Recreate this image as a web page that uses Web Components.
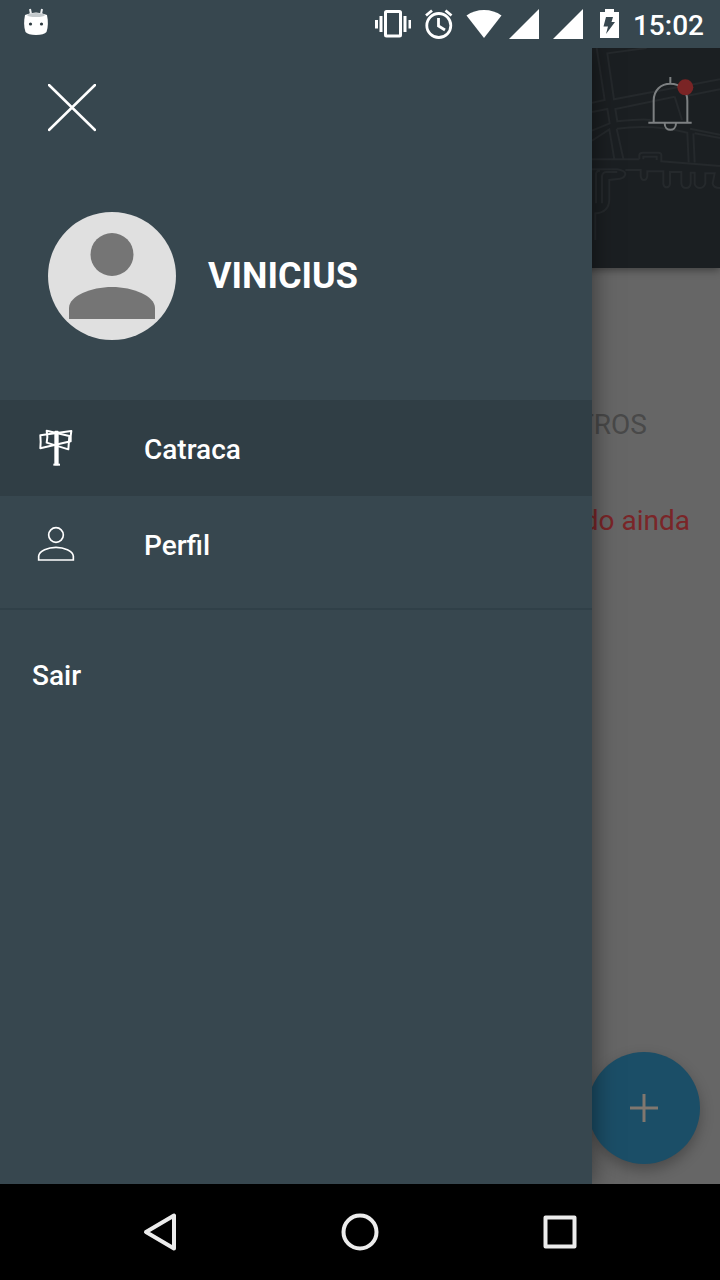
<!DOCTYPE html>
<html lang="pt-BR">
<head>
<meta charset="utf-8">
<meta name="viewport" content="width=device-width, initial-scale=1">
<title>Catraca</title>
<style>
  html, body { margin: 0; }
  body { font-family: Roboto, "Noto Sans", sans-serif; background: #000; }
</style>
</head>
<body>
<app-shell>
  <status-bar slot="status" time="15:02"></status-bar>
  <home-page slot="page"></home-page>
  <side-drawer slot="drawer" name="VINICIUS">
    <menu-item selected>
      <svg slot="icon" width="48" height="48" viewBox="36 42 144 144" fill="none" stroke="#fff" stroke-width="6" stroke-linejoin="round" aria-hidden="true">
        <path d="M61 76 154 63Q151 78 152 94L61 115Q63 96 61 76Z"/>
        <path d="M80 62 148 78 145 118 80 98Q84 80 80 62Z"/>
        <path d="M106 65H113V163H106Z" fill="#fff"/>
        <path d="M100 164H120"/>
      </svg>
      Catraca
    </menu-item>
    <menu-item>
      <svg slot="icon" width="48" height="48" viewBox="36 330 144 144" fill="none" stroke="#fff" stroke-width="5" aria-hidden="true">
        <circle cx="108" cy="375" r="22"/>
        <path d="M56 450V438C58 423 84 412 108 412S158 423 160 438V450Z"/>
      </svg>
      Perfil
    </menu-item>
    <menu-item slot="footer" plain>Sair</menu-item>
  </side-drawer>
  <nav-bar slot="nav"></nav-bar>
</app-shell>

<script>
class BaseElement extends HTMLElement {
  constructor() {
    super();
    this.attachShadow({ mode: 'open' });
  }
  connectedCallback() {
    this.shadowRoot.innerHTML = this.render();
  }
}

customElements.define('app-shell', class extends BaseElement {
  render() {
    return `
      <style>
        :host { display: flex; flex-direction: column; min-height: 100vh; }
        main { flex: 1; display: grid; grid-template-columns: minmax(0, 1fr) 128px; overflow: hidden; }
        slot { display: block; min-width: 0; }
        .page { grid-area: 1 / 1 / 2 / 3; display: grid; }
        .drawer { grid-area: 1 / 1; display: grid; z-index: 1; }
      </style>
      <slot name="status"></slot>
      <main>
        <slot class="page" name="page"></slot>
        <slot class="drawer" name="drawer"></slot>
      </main>
      <slot name="nav"></slot>`;
  }
});

customElements.define('status-bar', class extends BaseElement {
  render() {
    const signal = '<svg width="44" height="48" viewBox="0 0 44 48" aria-hidden="true"><path d="M34 9V39H4Z"/></svg>';
    return `
      <style>
        :host { display: flex; align-items: center; height: 48px; padding: 0 16px; background: #37474f; color: #fff; }
        svg { display: block; fill: #fff; }
        .android { margin-right: auto; }
        time { padding-left: 4px; padding-top: 4px; font-size: 28px; line-height: 32px; font-weight: 500; }
      </style>
      <svg class="android" width="40" height="48" viewBox="0 0 40 48" aria-hidden="true">
        <path d="M14 9 15 14M26 9 25 14" stroke="#eceff1" stroke-width="2"/>
        <path d="M9 15Q20 10 31 15Q33 25 30.500 32Q28 35 20 35T9.500 32Q7 25 9 15Z"/>
        <path d="M11 15Q12 13 20 13T29 15Q28 17 20 17T11 15Z" fill="#c3c9cc"/>
        <circle cx="14.500" cy="24" r="1.600" fill="#2d3a40"/><circle cx="25.500" cy="24" r="1.600" fill="#2d3a40"/>
      </svg>
      <svg width="48" height="48" viewBox="0 0 48 48" aria-hidden="true">
        <rect x="16.500" y="11.500" width="15" height="24.500" rx="1" fill="none" stroke="#fff" stroke-width="3"/>
        <path d="M10.500 16H13.500V32H10.500ZM6 20H9V28.500H6ZM34.500 16H37.500V32H34.500ZM39.500 20H42V28.500H39.500Z"/>
      </svg>
      <svg width="44" height="48" viewBox="0 0 44 48" aria-hidden="true">
        <g fill="none" stroke="#fff" stroke-width="2.800"><circle cx="21.800" cy="25.500" r="12"/><path d="M21.500 18V26L28 30M9 15.500 15 10.500M28.500 10.500 34.500 15.500"/></g>
      </svg>
      <svg width="44" height="48" viewBox="0 0 44 48" aria-hidden="true"><path d="M23 38 5.500 15.500Q13 10 23 10T40.500 15.500Z"/></svg>
      ${signal}${signal}
      <svg width="36" height="48" viewBox="0 0 36 48" aria-hidden="true">
        <path d="M7 12H12V9H21V12H26V38H7Z"/>
        <path d="M13 17H20L18.500 22H22L13 34 15 26.500H10.500Z" fill="#37474f"/>
      </svg>
      <time>${this.getAttribute('time')}</time>`;
  }
});

customElements.define('home-page', class extends BaseElement {
  render() {
    return `
      <style>
        :host { display: flex; flex-direction: column; position: relative; background: #666; }
        header { position: relative; display: flex; justify-content: flex-end; align-items: flex-start; box-sizing: border-box; height: 220px; padding: 28px 26px; background: #1b1f22; box-shadow: 0 2px 8px rgba(0,0,0,.4); }
        .map { position: absolute; top: 0; right: 0; }
        button { display: block; padding: 0; border: 0; background: none; font: inherit; }
        svg { display: block; }
        .bell { position: relative; }
        section { display: flex; flex-direction: column; align-items: flex-end; gap: 64px; padding: 141px 30px 0; font-size: 28px; line-height: 32px; }
        h2 { margin: 0; padding-right: 43px; font: inherit; color: #494949; }
        p { margin: 0; color: #7a2528; }
        .add { position: absolute; right: 20px; bottom: 20px; display: grid; place-items: center; width: 112px; height: 112px; border-radius: 50%; background: #1b4e67; box-shadow: 0 6px 14px rgba(0,0,0,.28); }
      </style>
      <header>
        <svg class="map" width="128" height="220" viewBox="36 24 384 660" fill="none" stroke="#25292c" stroke-width="6" aria-hidden="true">
          <path d="M50 24 74 180 36 188M200 24 82 40 102 178 420 118M420 148 318 168M284 170 106 207 112 244Q190 236 212 240M284 170 306 240M36 216 82 207 89 250 36 272"/>
          <path d="M36 302 88 268 103 358M36 358H178M110 266 130 356M110 266Q220 252 322 278L326 368M340 280 344 368M330 266 420 284M344 280 420 294"/>
          <path d="M178 358V346Q178 338 188 338H236Q244 338 244 346V364L420 378M190 358V350H230V360"/>
          <path d="M36 388H112Q136 392 136 402 134 414 120 416L88 420V480Q86 518 46 520V600M48 490V400Q50 392 60 392M66 490V408Q68 396 80 396H112"/>
          <path d="M136 390H182V408Q184 420 192 420T202 408V394H250V432Q252 442 260 442T270 432V396H304V430Q306 444 318 444T332 430V398H344V432Q348 444 360 444T376 430V400H404L398 430Q400 444 420 444"/>
        </svg>
        <button class="bell" type="button" aria-label="Notificações">
          <svg width="46" height="56" viewBox="204 108 138 168" fill="none" aria-hidden="true">
            <path d="M205 248H335M221 248V182C221 150 243 131 271 131S322 150 322 182V248M271 111V131M254 250C254 276 288 276 288 250" stroke="#7d8082" stroke-width="6"/>
            <circle cx="316" cy="142" r="24" fill="#7a2425"/>
          </svg>
        </button>
      </header>
      <section><h2>TROS</h2><p>do ainda</p></section>
      <button class="add" type="button" aria-label="Adicionar">
        <svg width="28" height="28" viewBox="0 0 28 28" stroke="#80776f" stroke-width="3" aria-hidden="true"><path d="M14 0V28M0 14H28"/></svg>
      </button>`;
  }
});

customElements.define('side-drawer', class extends BaseElement {
  render() {
    return `
      <style>
        :host { display: flex; flex-direction: column; box-sizing: border-box; padding-top: 36px; background: #37474f; color: #fff; box-shadow: 0 0 24px rgba(0,0,0,.5); }
        button { align-self: flex-start; display: block; margin: 0 48px 80px; padding: 0; border: 0; background: none; }
        svg { display: block; }
        .user { display: flex; align-items: center; gap: 32px; padding: 0 48px 60px; }
        h1 { margin: 0; font-size: 36px; line-height: 44px; font-weight: 700; }
        hr { width: 100%; height: 2px; margin: 16px 0; border: 0; background: #304048; }
      </style>
      <button type="button" aria-label="Fechar">
        <svg width="48" height="48" viewBox="0 0 48 48" stroke="#fff" stroke-width="2.500" stroke-linecap="round" aria-hidden="true"><path d="M1 1 47 46M47 1 1 46"/></svg>
      </button>
      <div class="user">
        <svg width="128" height="128" viewBox="0 0 128 128" aria-hidden="true">
          <circle cx="64" cy="64" r="64" fill="#e0e0e0"/>
          <circle cx="64" cy="42.500" r="21.500" fill="#757575"/>
          <path d="M21 107V96C21 84 43 75 64 75S107 84 107 96V107Z" fill="#757575"/>
        </svg>
        <h1>${this.getAttribute('name')}</h1>
      </div>
      <nav><slot></slot></nav>
      <hr>
      <slot name="footer"></slot>`;
  }
});

customElements.define('menu-item', class extends BaseElement {
  render() {
    return `
      <style>
        :host { display: block; }
        :host([selected]) { background: #303e45; }
        a { display: flex; align-items: center; gap: 64px; height: 96px; padding: 0 32px; color: #fff; text-decoration: none; font-size: 28px; line-height: 32px; font-weight: 500; }
        :host([plain]) a { gap: 0; }
        span { padding-top: 4px; }
        ::slotted(svg) { display: block; }
      </style>
      <a href="#"><slot name="icon"></slot><span><slot></slot></span></a>`;
  }
});

customElements.define('nav-bar', class extends BaseElement {
  render() {
    return `
      <style>
        :host { display: grid; grid-template-columns: repeat(3, 1fr); height: 96px; padding: 0 60px; background: #000; }
        button { display: grid; place-items: center; padding: 0; border: 0; background: none; }
        svg { display: block; fill: none; stroke: #ececec; stroke-width: 4; stroke-linejoin: round; }
      </style>
      <button type="button" aria-label="Voltar"><svg width="40" height="40" viewBox="0 0 40 40"><path d="M34 3.500V36.500L6 20Z"/></svg></button>
      <button type="button" aria-label="Início"><svg width="40" height="40" viewBox="0 0 40 40"><circle cx="20" cy="20" r="16.500"/></svg></button>
      <button type="button" aria-label="Recentes"><svg width="40" height="40" viewBox="0 0 40 40"><rect x="5.500" y="5.500" width="29" height="29"/></svg></button>`;
  }
});
</script>
</body>
</html>
